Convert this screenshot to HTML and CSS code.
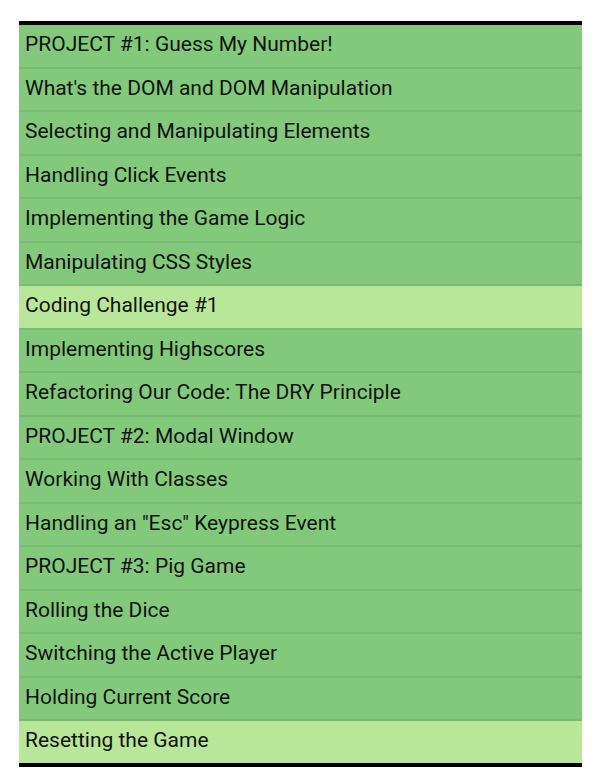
FILE: index.html
```html
<!DOCTYPE html>
<html>
<head>
<meta charset="utf-8">
<link rel="stylesheet" href="styles.css">
</head>
<body>
<ul class="list">
  <li class="item">PROJECT #1: Guess My Number!</li>
  <li class="item">What's the DOM and DOM Manipulation</li>
  <li class="item">Selecting and Manipulating Elements</li>
  <li class="item">Handling Click Events</li>
  <li class="item">Implementing the Game Logic</li>
  <li class="item">Manipulating CSS Styles</li>
  <li class="item item--active">Coding Challenge #1</li>
  <li class="item">Implementing Highscores</li>
  <li class="item">Refactoring Our Code: The DRY Principle</li>
  <li class="item">PROJECT #2: Modal Window</li>
  <li class="item">Working With Classes</li>
  <li class="item">Handling an "Esc" Keypress Event</li>
  <li class="item">PROJECT #3: Pig Game</li>
  <li class="item">Rolling the Dice</li>
  <li class="item">Switching the Active Player</li>
  <li class="item">Holding Current Score</li>
  <li class="item item--active">Resetting the Game</li>
</ul>
</body>
</html>
```
FILE: styles.css
```css
html, body {
  margin: 0;
  padding: 0;
  background: #ffffff;
}
body {
  padding: 21px 20px 0 19px;
  font-family: Roboto, "Liberation Sans", sans-serif;
}
.list {
  list-style: none;
  margin: 0;
  padding: 0;
  width: 563px;
  border-top: 4px solid #000;
  border-bottom: 4px solid #000;
}
.item {
  background: #82c97c;
  color: #111;
  font-size: 21px;
  line-height: 23.5px;
  padding: 8px 6px 10px;
  border-bottom: 2px solid #78bb73;
}
.item:last-child {
  border-bottom: none;
}
.item--active {
  background: #b9e799;
}
```
